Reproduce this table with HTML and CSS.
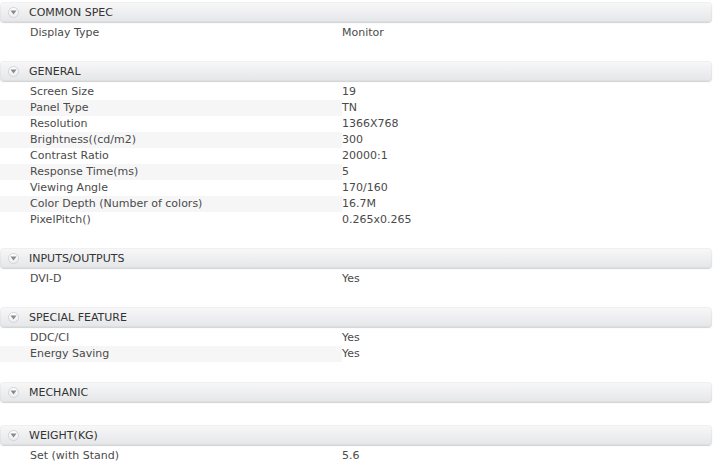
FILE: index.html
```html
<!DOCTYPE html>
<html>
<head>
<meta charset="utf-8">
<link rel="stylesheet" href="styles.css">
</head>
<body>
<div class="spec">
  <section class="group">
    <div class="group-head"><span class="toggle"><svg width="7" height="5" viewBox="0 0 7 5"><path d="M0.5 0.5 L6.5 0.5 L3.5 4.5 Z" fill="#8a8a8a"/></svg></span><span class="title">COMMON SPEC</span></div>
    <div class="rows">
      <div class="row"><span class="label">Display Type</span><span class="value">Monitor</span></div>
    </div>
  </section>
  <section class="group">
    <div class="group-head"><span class="toggle"><svg width="7" height="5" viewBox="0 0 7 5"><path d="M0.5 0.5 L6.5 0.5 L3.5 4.5 Z" fill="#8a8a8a"/></svg></span><span class="title">GENERAL</span></div>
    <div class="rows">
      <div class="row"><span class="label">Screen Size</span><span class="value">19</span></div>
      <div class="row"><span class="label">Panel Type</span><span class="value">TN</span></div>
      <div class="row"><span class="label">Resolution</span><span class="value">1366X768</span></div>
      <div class="row"><span class="label">Brightness((cd/m2)</span><span class="value">300</span></div>
      <div class="row"><span class="label">Contrast Ratio</span><span class="value">20000:1</span></div>
      <div class="row"><span class="label">Response Time(ms)</span><span class="value">5</span></div>
      <div class="row"><span class="label">Viewing Angle</span><span class="value">170/160</span></div>
      <div class="row"><span class="label">Color Depth (Number of colors)</span><span class="value">16.7M</span></div>
      <div class="row"><span class="label">PixelPitch()</span><span class="value">0.265x0.265</span></div>
    </div>
  </section>
  <section class="group">
    <div class="group-head"><span class="toggle"><svg width="7" height="5" viewBox="0 0 7 5"><path d="M0.5 0.5 L6.5 0.5 L3.5 4.5 Z" fill="#8a8a8a"/></svg></span><span class="title">INPUTS/OUTPUTS</span></div>
    <div class="rows">
      <div class="row"><span class="label">DVI-D</span><span class="value">Yes</span></div>
    </div>
  </section>
  <section class="group">
    <div class="group-head"><span class="toggle"><svg width="7" height="5" viewBox="0 0 7 5"><path d="M0.5 0.5 L6.5 0.5 L3.5 4.5 Z" fill="#8a8a8a"/></svg></span><span class="title">SPECIAL FEATURE</span></div>
    <div class="rows">
      <div class="row"><span class="label">DDC/CI</span><span class="value">Yes</span></div>
      <div class="row"><span class="label">Energy Saving</span><span class="value">Yes</span></div>
    </div>
  </section>
  <section class="group">
    <div class="group-head"><span class="toggle"><svg width="7" height="5" viewBox="0 0 7 5"><path d="M0.5 0.5 L6.5 0.5 L3.5 4.5 Z" fill="#8a8a8a"/></svg></span><span class="title">MECHANIC</span></div>
    <div class="rows"></div>
  </section>
  <section class="group">
    <div class="group-head"><span class="toggle"><svg width="7" height="5" viewBox="0 0 7 5"><path d="M0.5 0.5 L6.5 0.5 L3.5 4.5 Z" fill="#8a8a8a"/></svg></span><span class="title">WEIGHT(KG)</span></div>
    <div class="rows">
      <div class="row"><span class="label">Set (with Stand)</span><span class="value">5.6</span></div>
    </div>
  </section>
</div>
</body>
</html>
```
FILE: styles.css
```css
html, body {
  margin: 0;
  padding: 0;
  background: #ffffff;
}
body {
  font-family: "DejaVu Sans", Verdana, sans-serif;
  font-size: 11px;
  color: #4a4a4a;
}
.spec {
  padding: 2px 2px 0 0;
}
.group-head {
  height: 20px;
  display: flex;
  align-items: center;
  border-radius: 4px;
  background: linear-gradient(#f8f8f9, #e5e6e8);
  box-shadow: 0 1px 1px rgba(0, 0, 0, 0.18), inset 0 0 0 1px rgba(0, 0, 0, 0.03);
}
.toggle {
  width: 11px;
  height: 11px;
  margin-left: 8px;
  margin-right: 10px;
  border-radius: 50%;
  border: 1px solid #d4d4d6;
  background: linear-gradient(#ffffff, #eeeeef);
  display: flex;
  align-items: center;
  justify-content: center;
  box-sizing: border-box;
}
.toggle svg {
  display: block;
  margin-top: 1px;
}
.title {
  color: #333333;
  font-weight: 500;
}
.rows {
  padding: 3px 0 20px;
}
.row {
  display: flex;
  height: 16px;
  line-height: 16px;
}
.row:nth-child(even) .label {
  background: #f6f6f6;
}
.label {
  width: 312px;
  padding-left: 30px;
}
.value {
  padding-left: 0;
}
```
